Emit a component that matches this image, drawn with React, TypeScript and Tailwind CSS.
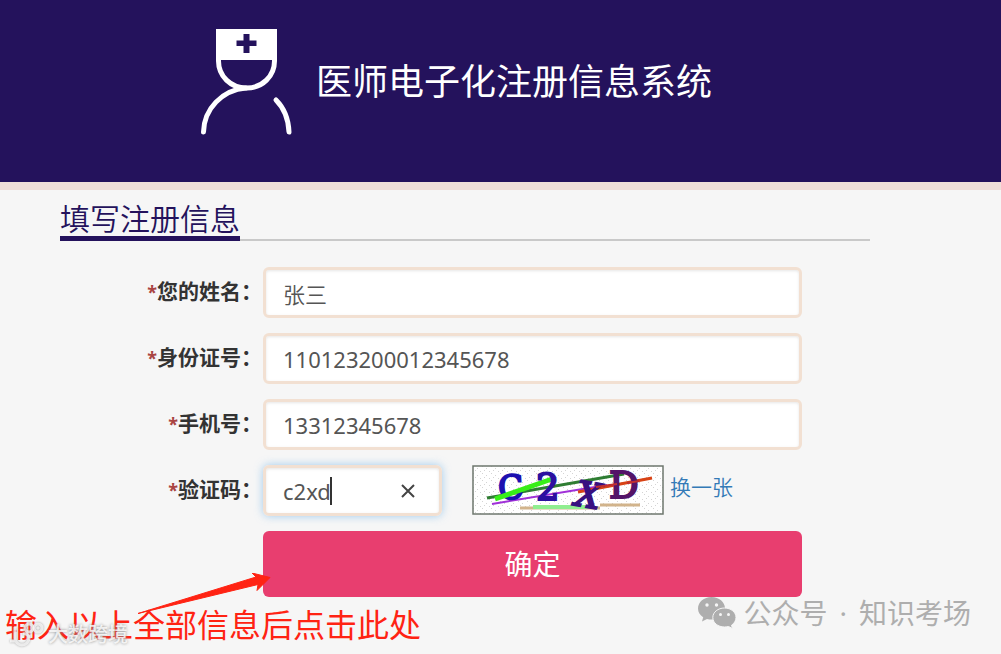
import { useState } from "react";
import type { ReactNode } from "react";

const inputClass =
  "block h-[51px] w-full rounded-md border-3 border-[#f2e0d2] bg-white px-[17px] text-[22px] leading-7 text-[#555] shadow-[inset_0_1px_3px_rgba(0,0,0,0.1)] outline-none";

function NurseLogo() {
  return (
    <svg className="h-[106px] w-[92px] shrink-0" viewBox="0 0 92 106" fill="none" aria-hidden="true">
      <path d="M16 0h61v31H16z" fill="#fff" />
      <path d="M43.500 5h6v6.500h7v5.500h-7v7h-6v-7h-7v-5.500h7z" fill="#24125c" />
      <path d="M18.500 28v4c0 15 12 27 28 27s28-12 28-27v-4" stroke="#fff" strokeWidth="5" />
      <path d="M46 59C22 61 4 80 3.500 103" stroke="#fff" strokeWidth="5" strokeLinecap="round" />
      <path d="M76 71c8 8 12.500 20 13 32" stroke="#fff" strokeWidth="5" strokeLinecap="round" />
    </svg>
  );
}

function CaptchaImage() {
  return (
    <svg className="h-[50px] w-[192px] shrink-0 overflow-visible" viewBox="0 0 192 50" role="img" aria-label="C2XD">
      <defs>
        <pattern id="dots" width="9" height="7" patternUnits="userSpaceOnUse">
          <path d="M1 1h1v1H1zM5 3h1v1H5zM8 6h1v1H8zM3 5h1v1H3z" fill="#d4d4d4" />
        </pattern>
      </defs>
      <rect x="1" y="1" width="190" height="48" fill="#fff" />
      <rect x="1" y="1" width="190" height="48" fill="url(#dots)" stroke="#6e776e" strokeWidth="1.500" />
      <path d="M15 33L152 9" stroke="#2e7d32" strokeWidth="3" />
      <path d="M48 43h80M128 40h40" stroke="#d2b48c" strokeWidth="3" />
      <path d="M61 42h56" stroke="#90ee90" strokeWidth="4" />
      <path d="M20 39L135 20" stroke="#a030d8" strokeWidth="2" />
      <path d="M106 27L180 13" stroke="#d84315" strokeWidth="3" />
      <g fontFamily="'DejaVu Serif', serif" strokeWidth="2">
        <text x="26" y="34" fontSize="33" fill="#1c10b0" stroke="#1c10b0" transform="rotate(-3 38 22)">C</text>
        <path d="M23 34L80 14" stroke="#38ee18" strokeWidth="5" />
        <text x="64" y="35" fontSize="37" fill="#2c10a0" stroke="#2c10a0">2</text>
        <text x="104" y="42" fontSize="35" fontStyle="italic" fill="#381080" stroke="#381080" transform="rotate(10 114 30)">X</text>
        <text x="137" y="33" fontSize="37" fill="#541468" stroke="#541468">D</text>
      </g>
      <path d="M124 22l21-3M155 18l12-2" stroke="#c03030" strokeWidth="2" />
    </svg>
  );
}

function WechatIcon() {
  return (
    <svg className="h-8 w-[38px] shrink-0" viewBox="0 0 38 32" aria-hidden="true">
      <path d="M13.500 0C6 0 0 5 0 11.500c0 3.700 2 6.700 5.200 8.800L4 24.500l5-2.600c1.600.5 3 .6 4.800.6C21 22.500 27 17.500 27 11.300S21 0 13.500 0z" fill="#aeaeae" />
      <path d="M26.500 11C20 11 14.800 15.200 14.800 20.500S20 30 26.500 30c1.400 0 2.800-.2 4-.5l4 2-1-3.300c2.700-1.800 4.500-4.500 4.500-7.700C38 15.200 33 11 26.500 11z" fill="#aeaeae" stroke="#f6f6f6" strokeWidth="1" />
      <g fill="#f6f6f6">
        <circle cx="9" cy="8" r="1.700" />
        <circle cx="18.500" cy="8" r="1.700" />
        <circle cx="22.500" cy="17.500" r="1.500" />
        <circle cx="30.500" cy="17.500" r="1.500" />
      </g>
    </svg>
  );
}

function Field({ id, label, children }: { id: string; label: string; children: ReactNode }) {
  return (
    <div className="flex items-center">
      <label htmlFor={id} className="w-[203px] shrink-0 pr-px pb-0.5 text-right text-[21px] leading-7 font-bold text-[#333]">
        <span className="text-lg text-[#a94442]">*</span>
        {label}
      </label>
      <div className="flex h-[51px] min-w-0 flex-1 items-start">{children}</div>
    </div>
  );
}

export default function App() {
  const [name, setName] = useState("张三");
  const [idNumber, setIdNumber] = useState("110123200012345678");
  const [phone, setPhone] = useState("13312345678");
  const [code, setCode] = useState("c2xd");

  return (
    <div className="min-h-screen overflow-hidden bg-[#f6f6f6] font-['Noto_Sans','Noto_Sans_CJK_SC',sans-serif]">
      <header className="flex items-start gap-6 border-b-8 border-[#f0dfd9] bg-[#24125c] pt-[29px] pb-[47px] pl-[200px] text-white">
        <NurseLogo />
        <h1 className="pt-7 text-4xl leading-[50px] whitespace-nowrap">医师电子化注册信息系统</h1>
      </header>

      <main className="pr-8 pl-[60px]">
        <div className="max-w-[810px]">
          <div className="flex border-b-2 border-[#c9c9c9] pt-2">
            <h2 className="-mb-[2px] border-b-5 border-[#24125c] pt-1 text-3xl leading-[34px] font-[350] text-[#24125c]">
              填写注册信息
            </h2>
          </div>

          <form className="mt-[26px] flex flex-col gap-[15px] pr-[68px]" onSubmit={(e) => e.preventDefault()}>
            <Field id="name" label="您的姓名：">
              <input id="name" className={`${inputClass} font-[350]`} value={name} onChange={(e) => setName(e.target.value)} />
            </Field>
            <Field id="id-number" label="身份证号：">
              <input id="id-number" className={inputClass} value={idNumber} onChange={(e) => setIdNumber(e.target.value)} />
            </Field>
            <Field id="phone" label="手机号：">
              <input id="phone" className={inputClass} value={phone} onChange={(e) => setPhone(e.target.value)} />
            </Field>
            <Field id="code" label="验证码：">
              <div className="relative w-[179px] shrink-0 rounded-md shadow-[0_0_8px_rgba(102,175,233,0.6)]">
                <input id="code" className={inputClass} value={code} onChange={(e) => setCode(e.target.value)} />
                <span className="absolute top-3 left-[67px] h-7 w-[2px] bg-[#333]" />
                <button
                  type="button"
                  aria-label="清除"
                  onClick={() => setCode("")}
                  className="absolute top-4 right-6 flex size-5 items-center justify-center"
                >
                  <svg className="size-[14px]" viewBox="0 0 14 14" stroke="#444" strokeWidth="2" aria-hidden="true">
                    <path d="M1 1l12 12M13 1L1 13" />
                  </svg>
                </button>
              </div>
              <div className="ml-[30px] flex gap-[6px]">
                <CaptchaImage />
                <a href="#" className="pt-2 text-[21px] leading-7 font-[350] whitespace-nowrap text-[#337ab7]">
                  换一张
                </a>
              </div>
            </Field>
            <button type="submit" className="ml-[203px] h-[66px] rounded-md bg-[#e83e6f] text-[28px] text-white">
              确定
            </button>
          </form>
        </div>
      </main>

      <footer className="relative flex justify-between pr-[30px] pl-[5px]">
        <svg className="absolute -top-6 left-[137px] h-[42px] w-[135px]" viewBox="0 0 135 42" aria-hidden="true">
          <path d="M1 40.500L119 4l-4-4 18 4.500-13 13 1-6z" fill="#ff2313" stroke="#ff2313" strokeWidth="1" />
        </svg>
        <p className="pt-2 text-[32px] leading-10 whitespace-nowrap text-[#ff2313]">输入以上全部信息后点击此处</p>
        <div className="flex items-start gap-[7px] text-[28px] leading-8 whitespace-nowrap text-[#aeaeae]">
          <WechatIcon />
          <div className="flex gap-3">
            <span>公众号</span>
            <span>·</span>
            <span>知识考场</span>
          </div>
        </div>
        <div className="absolute top-6 left-2 flex items-center gap-1 text-xl leading-7 font-medium whitespace-nowrap text-white/80 [text-shadow:0_0_3px_#888]">
          <svg className="h-7 w-9 drop-shadow-[0_0_1px_#888]" viewBox="0 0 36 28" fill="none" stroke="#fff" strokeOpacity="0.7" strokeWidth="3" aria-hidden="true">
            <path d="M7 6v11a7 7 0 0 0 14 0c0-3-3-5-6-4M2 20h6" />
            <circle cx="21" cy="7" r="4" />
            <circle cx="30" cy="7" r="4" />
          </svg>
          <span>大数跨境</span>
        </div>
      </footer>
    </div>
  );
}
